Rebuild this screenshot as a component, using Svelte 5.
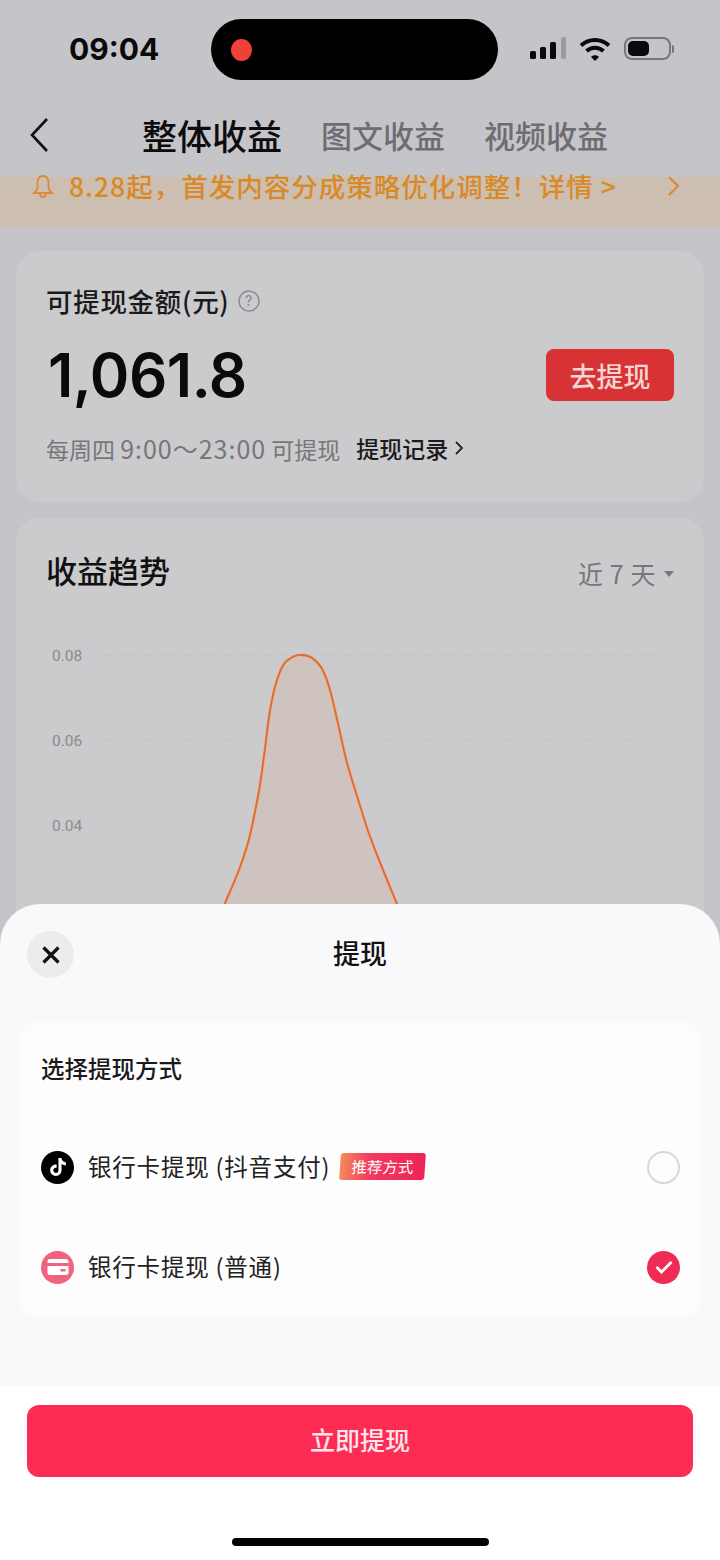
<script>
	const gridLines = [
		{ label: '0.08', y: 35.5 },
		{ label: '0.06', y: 120.5 },
		{ label: '0.04', y: 206 }
	];

	// chart curve, passed through the sampled points as a smooth spline
	const points = [
		[198, 310], [209, 283.3], [222.3, 251.7], [232.3, 221.7], [239, 191.7], [244, 165], [249, 128.3],
		[253.3, 95], [259, 66.7], [267.3, 45], [277.3, 36.7], [285.7, 35], [295.7, 37.7], [305.7, 48.3],
		[314, 70], [322.3, 105], [330.7, 141.7], [340.7, 175], [352.3, 211.7], [365.7, 246.7], [380.7, 283.3], [392, 312]
	];

	function spline(pts) {
		let d = `M${pts[0][0]} ${pts[0][1]}`;
		for (let i = 0; i < pts.length - 1; i++) {
			const p0 = pts[Math.max(i - 1, 0)];
			const p1 = pts[i];
			const p2 = pts[i + 1];
			const p3 = pts[Math.min(i + 2, pts.length - 1)];
			const c1x = p1[0] + (p2[0] - p0[0]) / 6;
			const c1y = p1[1] + (p2[1] - p0[1]) / 6;
			const c2x = p2[0] - (p3[0] - p1[0]) / 6;
			const c2y = p2[1] - (p3[1] - p1[1]) / 6;
			d += `C${c1x} ${c1y} ${c2x} ${c2y} ${p2[0]} ${p2[1]}`;
		}
		return d;
	}

	const curve = spline(points);
</script>

<div class="page">
	<div class="status">
		<span class="time">09:04</span>
		<div class="island"><span class="rec"></span></div>
		<svg class="signal" width="37" height="24" viewBox="0 0 37 24">
			<rect x="0" y="14" width="6" height="8" rx="1.5" fill="#0a0a0c" />
			<rect x="10" y="10" width="6" height="12" rx="1.5" fill="#0a0a0c" />
			<rect x="20" y="5" width="6" height="17" rx="1.5" fill="#0a0a0c" />
			<rect x="31" y="0" width="5" height="22" rx="1.5" fill="#9c9ca0" />
		</svg>
		<svg class="wifi" width="32" height="26" viewBox="0 0 32 26" fill="none" stroke="#0a0a0c" stroke-width="4">
			<path d="M2 9.5C10 2 22 2 30 9.5" />
			<path d="M7.5 15C12.5 10.5 19.5 10.5 24.5 15" />
			<path d="M12 21L16 25L20 21C18 18.5 14 18.5 12 21Z" fill="#0a0a0c" stroke="none" />
		</svg>
		<div class="battery"><span></span></div>
		<span class="nub"></span>
	</div>

	<div class="nav">
		<svg class="back" width="20" height="36" viewBox="0 0 20 36" fill="none" stroke="#111" stroke-width="2.6">
			<path d="M18 2L3 18L18 34" />
		</svg>
		<span class="tab active">整体收益</span>
		<span class="tab">图文收益</span>
		<span class="tab">视频收益</span>
	</div>

	<div class="notice">
		<svg width="22" height="24" viewBox="0 0 22 24" fill="none" stroke="#d98a3a" stroke-width="1.8">
			<path d="M11 1C7 1 5.5 4 5.5 8V13C5.5 15 3 17 2 18H20C19 17 16.5 15 16.5 13V8C16.5 4 15 1 11 1Z" />
			<path d="M8 19C8 23 14 23 14 19" />
		</svg>
		<span class="notice-text">8.28起，首发内容分成策略优化调整！详情 &gt;</span>
		<svg class="notice-arrow" width="14" height="22" viewBox="0 0 14 22" fill="none" stroke="#d98a3a" stroke-width="2.2">
			<path d="M2 2L11 11L2 20" />
		</svg>
	</div>

	<section class="card balance">
		<div class="balance-title">
			<span>可提现金额(元)</span>
			<svg width="22" height="22" viewBox="0 0 22 22" fill="none">
				<circle cx="11" cy="11" r="10" stroke="#8d8c90" stroke-width="1.5" />
				<text x="11" y="16" text-anchor="middle" font-size="14" fill="#8d8c90" font-family="Inter, sans-serif">?</text>
			</svg>
		</div>
		<div class="balance-row">
			<span class="amount">1,061.8</span>
			<button class="go">去提现</button>
		</div>
		<div class="balance-foot">
			<span class="hint">每周四 <span class="hours">9:00～23:00</span> 可提现</span>
			<span class="record">提现记录</span>
			<svg width="10" height="16" viewBox="0 0 10 16" fill="none" stroke="#222" stroke-width="1.8">
				<path d="M2 2L8 8L2 14" />
			</svg>
		</div>
	</section>

	<section class="card trend">
		<div class="trend-head">
			<span class="trend-title">收益趋势</span>
			<span class="range">近 7 天</span>
			<span class="caret"></span>
		</div>
		<svg class="chart" width="688" height="300" viewBox="0 0 688 300">
			{#each gridLines as line}
				<text x="36" y={line.y + 5} font-size="15.5" fill="#8c8b8f" font-family="Roboto, sans-serif">{line.label}</text>
				<line x1="83" x2="654" y1={line.y} y2={line.y} stroke="#c3c2c6" stroke-width="1" stroke-dasharray="3 2" />
			{/each}
			<path d={curve} fill="#cfc3bf" />
			<path d={curve} fill="none" stroke="#eeb190" stroke-width="3.4" />
			<path d={curve} fill="none" stroke="#d86c38" stroke-width="1.8" />
		</svg>
	</section>

	<div class="sheet">
		<div class="sheet-head">
			<span class="close">
				<svg width="20" height="20" viewBox="0 0 20 20" fill="none" stroke="#111" stroke-width="3.2">
					<path d="M2.5 2.5L17.5 17.5M17.5 2.5L2.5 17.5" />
				</svg>
			</span>
			<span class="sheet-title">提现</span>
		</div>

		<div class="methods">
			<div class="methods-title">选择提现方式</div>
			<div class="method">
				<span class="logo douyin">
					<svg width="24" height="24" viewBox="0 0 24 24">
						<path fill="#fff" d="M16.6 5.82A4.278 4.278 0 0 1 15.54 3h-3.09v12.4a2.592 2.592 0 0 1-2.59 2.5c-1.42 0-2.6-1.16-2.6-2.6 0-1.72 1.66-3.01 3.37-2.48V9.66c-3.45-.46-6.47 2.22-6.47 5.64 0 3.33 2.76 5.7 5.69 5.7 3.14 0 5.69-2.55 5.69-5.7V9.01a7.35 7.35 0 0 0 4.3 1.38V7.3s-1.88.09-3.24-1.48z" />
					</svg>
				</span>
				<span class="method-name">银行卡提现 (抖音支付)</span>
				<span class="badge">推荐方式</span>
				<span class="radio"></span>
			</div>
			<div class="method">
				<span class="logo bank">
					<svg width="22" height="18" viewBox="0 0 22 18">
						<path fill="#fff" d="M3 1H19A2.5 2.5 0 0 1 21.5 3.5V5H.5V3.5A2.5 2.5 0 0 1 3 1ZM.5 8H21.5V14.5A2.5 2.5 0 0 1 19 17H3A2.5 2.5 0 0 1 .5 14.5Z" />
						<rect x="13.5" y="11" width="5" height="2.5" fill="#f0637f" />
					</svg>
				</span>
				<span class="method-name">银行卡提现 (普通)</span>
				<span class="radio checked">
					<svg width="20" height="16" viewBox="0 0 20 16" fill="none" stroke="#fff" stroke-width="2.8">
						<path d="M2.5 8L7.5 13L17.5 3" />
					</svg>
				</span>
			</div>
		</div>

		<div class="sheet-foot">
			<button class="submit">立即提现</button>
			<span class="home"></span>
		</div>
	</div>
</div>

<style>
	:global(body) {
		margin: 0;
	}

	.page {
		position: relative;
		width: 720px;
		height: 1560px;
		overflow: hidden;
		background: #c5c5c9;
		font-family: "Noto Sans CJK SC", "Noto Sans", sans-serif;
		color: #111;
	}

	.status {
		display: flex;
		align-items: flex-start;
		height: 100px;
		box-sizing: border-box;
		padding: 19px 0 0 69px;
	}

	.time {
		width: 91px;
		margin-right: 51px;
		margin-top: 12px;
		font: 700 30px/36px Inter, sans-serif;
		color: #0a0a0c;
		white-space: nowrap;
	}

	.island {
		display: flex;
		align-items: center;
		width: 287px;
		height: 61px;
		margin-right: 32px;
		padding-left: 20px;
		box-sizing: border-box;
		border-radius: 31px;
		background: #000;
	}

	.rec {
		width: 21px;
		height: 22px;
		border-radius: 50%;
		background: #ee4238;
	}

	.signal {
		margin-top: 18px;
		margin-right: 12px;
	}

	.wifi {
		margin-top: 17px;
		margin-right: 13px;
	}

	.battery {
		width: 47px;
		height: 23px;
		margin-top: 18px;
		box-sizing: border-box;
		padding: 2px;
		border: 2px solid #77777a;
		border-radius: 8px;
	}

	.battery span {
		display: block;
		width: 21px;
		height: 15px;
		border-radius: 5px;
		background: #0a0a0c;
	}

	.nub {
		width: 2px;
		height: 8px;
		margin: 26px 0 0 1px;
		border-radius: 0 2px 2px 0;
		background: #77777a;
	}

	.nav {
		display: flex;
		align-items: center;
		gap: 39px;
		height: 77px;
		box-sizing: border-box;
		padding: 0 0 7px 29px;
	}

	.back {
		margin-right: 54px;
	}

	.tab {
		font-size: 31px;
		font-weight: 500;
		line-height: 44px;
		color: #6d6d72;
	}

	.tab.active {
		font-size: 35px;
		color: #0c0c0e;
	}

	.notice {
		display: flex;
		align-items: flex-start;
		height: 50px;
		box-sizing: border-box;
		padding-left: 32px;
		background: #ccbfb2;
	}

	.notice svg {
		margin-top: -2px;
	}

	.notice-text {
		margin: -8px 0 0 15px;
		font-size: 26.5px;
		font-weight: 500;
		letter-spacing: 1px;
		line-height: 34px;
		color: #d98a26;
	}

	.notice .notice-arrow {
		margin: -2px 39px 0 auto;
	}

	.card {
		margin: 0 16px;
		border-radius: 24px;
		background: #cbcacd;
	}

	.balance {
		height: 251px;
		margin-top: 24px;
		margin-bottom: 16px;
		box-sizing: border-box;
		padding: 33px 30px 0 31px;
	}

	.balance-title {
		display: flex;
		align-items: center;
		gap: 9px;
		margin-left: -1px;
		font-size: 26.5px;
		font-weight: 500;
		letter-spacing: .7px;
		line-height: 34px;
		color: #1a1a1c;
	}

	.balance-row {
		display: flex;
		align-items: center;
		justify-content: space-between;
		height: 70px;
		margin-top: 22px;
	}

	.amount {
		margin-left: 1px;
		font: 600 60px/70px Inter, sans-serif;
		letter-spacing: -.5px;
		color: #0a0a0c;
	}

	.go {
		width: 128px;
		height: 52px;
		padding: 0;
		border: none;
		border-radius: 8px;
		background: #d93234;
		font-family: inherit;
		font-size: 27px;
		font-weight: 500;
		color: #f3d6d4;
	}

	.balance-foot {
		display: flex;
		align-items: center;
		height: 32px;
		margin-top: 22px;
		font-size: 23px;
	}

	.hint {
		margin-left: -1px;
		margin-right: 16px;
		color: #77767a;
	}

	.hours {
		font-size: 25px;
		letter-spacing: 1px;
	}

	.record {
		margin-right: 6px;
		font-weight: 500;
		color: #1a1a1c;
	}

	.trend {
		height: 500px;
		padding: 33px 30px 0 31px;
		box-sizing: border-box;
	}

	.trend-head {
		display: flex;
		align-items: center;
		height: 36px;
	}

	.trend-title {
		flex: 1;
		margin-left: -1px;
		font-size: 31px;
		font-weight: 500;
		color: #111;
	}

	.range {
		margin-top: 8px;
		font-size: 25px;
		letter-spacing: .6px;
		color: #77767a;
	}

	.caret {
		width: 0;
		height: 0;
		margin: 10px 0 0 8px;
		border-left: 5px solid transparent;
		border-right: 5px solid transparent;
		border-top: 6px solid #77767a;
	}

	.chart {
		display: block;
		margin: 33px 0 0 -31px;
	}

	.sheet {
		position: absolute;
		left: 0;
		right: 0;
		bottom: 0;
		height: 656px;
		display: flex;
		flex-direction: column;
		border-radius: 40px 40px 0 0;
		background: #f9f8fa;
	}

	.sheet-head {
		position: relative;
		display: flex;
		align-items: center;
		justify-content: center;
		height: 96px;
		flex-shrink: 0;
	}

	.close {
		position: absolute;
		left: 27px;
		top: 27px;
		display: flex;
		align-items: center;
		justify-content: center;
		width: 47px;
		height: 47px;
		border-radius: 50%;
		background: #ececee;
	}

	.sheet-title {
		font-size: 27px;
		font-weight: 500;
		color: #111;
	}

	.methods {
		height: 295px;
		margin: 22px 20px 0;
		box-sizing: border-box;
		padding: 28px 20px 0 21px;
		border-radius: 18px;
		background: #fefdfe;
	}

	.methods-title {
		height: 36px;
		margin-bottom: 31px;
		font-size: 23.5px;
		font-weight: 500;
		line-height: 36px;
		color: #1a1a1c;
	}

	.method {
		display: flex;
		align-items: center;
		height: 100px;
	}

	.logo {
		display: flex;
		align-items: center;
		justify-content: center;
		width: 33px;
		height: 33px;
		margin-right: 14px;
		border-radius: 50%;
	}

	.douyin {
		background: #000;
	}

	.bank {
		background: #f0637f;
	}

	.method-name {
		margin-top: -2px;
		font-size: 23.5px;
		letter-spacing: .8px;
		line-height: 34px;
		color: #222;
	}

	.badge {
		width: 85px;
		height: 27px;
		margin: -2px 0 0 10px;
		border-radius: 3px;
		background: linear-gradient(90deg, #f58a5c, #f23a5e 35%, #ee2456);
		font-size: 15.5px;
		line-height: 27px;
		text-align: center;
		color: #fff;
		transform: skewX(-4deg);
	}

	.radio {
		display: flex;
		align-items: center;
		justify-content: center;
		width: 33px;
		height: 33px;
		margin-left: auto;
		box-sizing: border-box;
		border: 2.5px solid #d8d8d8;
		border-radius: 50%;
	}

	.radio.checked {
		border: none;
		background: #f02c55;
	}

	.sheet-foot {
		position: relative;
		display: flex;
		flex: 1;
		justify-content: center;
		margin-top: 68px;
		padding-top: 20px;
		background: #fff;
	}

	.submit {
		width: 666px;
		height: 72px;
		padding: 0 0 4px;
		border: none;
		border-radius: 12px;
		background: #fe2c55;
		font-family: inherit;
		font-size: 25px;
		font-weight: 500;
		color: #fde6ea;
	}

	.home {
		position: absolute;
		left: 232px;
		bottom: 14px;
		width: 257px;
		height: 8px;
		border-radius: 4px;
		background: #000;
	}
</style>
